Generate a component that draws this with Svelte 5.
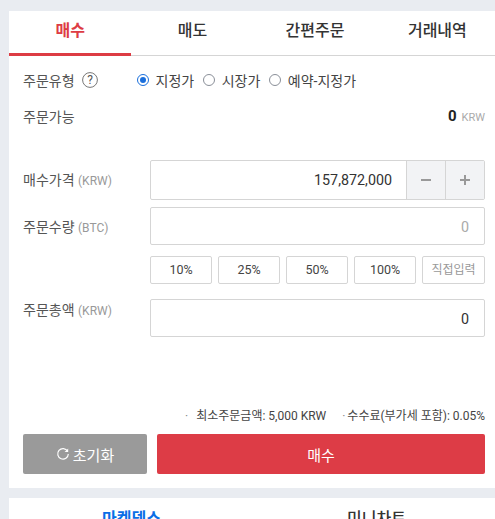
<script>
  const tabs = ['매수', '매도', '간편주문', '거래내역'];
  const pcts = ['10%', '25%', '50%', '100%'];
</script>

<div class="page">
  <section class="panel">
    <nav class="tabs">
      {#each tabs as t, i}
        <div class="tab" class:active={i === 0}>{t}</div>
      {/each}
    </nav>
    <div class="body">
      <div class="row type">
        <div class="label typelabel">주문유형
          <svg class="help" width="16" height="16" viewBox="0 0 16 16"><circle cx="8" cy="8" r="7.4" fill="none" stroke="#777" stroke-width="1"/><text x="8" y="12.2" text-anchor="middle" font-size="12" fill="#555" font-family="Roboto">?</text></svg>
        </div>
        <div class="radios">
          <span class="radio on"></span><span class="rtext">지정가</span>
          <span class="radio"></span><span class="rtext">시장가</span>
          <span class="radio"></span><span class="rtext">예약-지정가</span>
        </div>
      </div>
      <div class="row avail">
        <div class="label">주문가능</div>
        <div class="amount"><b>0</b><span>KRW</span></div>
      </div>
      <div class="row field price">
        <div class="label">매수가격 <small>(KRW)</small></div>
        <div class="box pricebox">
          <div class="val">157,872,000</div>
          <div class="step"><svg width="12" height="12" viewBox="0 0 12 12"><rect x="1" y="5" width="10" height="2" fill="#999"/></svg></div>
          <div class="step"><svg width="12" height="12" viewBox="0 0 12 12"><rect x="1" y="5" width="10" height="2" fill="#999"/><rect x="5" y="1" width="2" height="10" fill="#999"/></svg></div>
        </div>
      </div>
      <div class="row field qty">
        <div class="label">주문수량 <small>(BTC)</small></div>
        <div class="box input muted">0</div>
      </div>
      <div class="pcts">
        {#each pcts as p}<div class="pct">{p}</div>{/each}
        <div class="pct direct">직접입력</div>
      </div>
      <div class="row field total">
        <div class="label">주문총액 <small>(KRW)</small></div>
        <div class="box input">0</div>
      </div>
      <div class="notes">
        <span class="n1">최소주문금액: 5,000 KRW</span>
        <span class="n2">수수료(부가세 포함): 0.05%</span>
      </div>
      <div class="actions">
        <div class="btn reset">
          <svg width="14" height="14" viewBox="0 0 14 14"><path d="M11.6 4.2A5.3 5.3 0 1 0 12.3 7" fill="none" stroke="#fff" stroke-width="1.2"/><path d="M12.2 1.4v3.6H8.6z" fill="#fff"/></svg>
          초기화
        </div>
        <div class="btn buy">매수</div>
      </div>
    </div>
  </section>
  <section class="panel second">
    <div class="t2 blue">마켓뎁스</div>
    <div class="t2">미니차트</div>
  </section>
</div>

<style>
  :global(html), :global(body) { margin: 0; height: 100%; overflow: hidden; background: #e9ecf1; }
  .page {
    width: 495px; height: 519px; overflow: hidden; padding: 11px 0 0 9px; box-sizing: border-box;
    font-family: Roboto, "Noto Sans CJK KR", sans-serif; color: #333; font-size: 14px;
  }
  .panel { width: 490px; background: #fff; }
  .tabs { display: grid; grid-template-columns: repeat(4, 122.4px); height: 45px; border-bottom: 1px solid #d5d5d5; box-sizing: border-box; }
  .tab { text-align: center; font-size: 16px; font-weight: 500; line-height: 40px; height: 45px; box-sizing: border-box; color: #333; }
  .tab.active { color: #dd3c44; font-weight: 700; border-bottom: 3px solid #dd3c44; }
  .body { padding: 11px 14px 0 14px; height: 432px; box-sizing: border-box; position: relative; }
  .row { display: flex; }
  .label { font-size: 14px; color: #555; }
  .label small { font-size: 12px; color: #999; }
  .type { align-items: center; height: 26px; }
  .typelabel { width: 113px; display: flex; align-items: center; gap: 7.5px; flex: none; }
  .radios { display: flex; align-items: center; }
  .radio { width: 10px; height: 10px; border: 1.5px solid #8a8f98; border-radius: 50%; box-sizing: content-box; position: relative; margin-left: 1px; }
  .radio.on { border-color: #1a6fdc; }
  .radio.on::after { content: ''; position: absolute; inset: 2px; border-radius: 50%; background: #1a6fdc; }
  .rtext { margin: 0 8px 0 6.5px; color: #444; }
  .avail { justify-content: space-between; align-items: center; margin-top: 13px; height: 20px; }
  .amount { display: flex; align-items: baseline; gap: 5px; }
  .amount b { font-size: 15px; font-weight: 700; color: #222; }
  .amount span { font-size: 11px; color: #aaa; }
  .field { justify-content: space-between; }
  .box { width: 335px; box-sizing: border-box; border: 1px solid #d5d5d5; border-radius: 2px; background: #fff; }
  .price { margin-top: 34px; align-items: center; height: 40px; }
  .price .label { padding-bottom: 2px; }
  .pricebox { display: flex; height: 40px; }
  .val { flex: 1; text-align: right; padding-right: 14px; line-height: 39px; font-size: 14.3px; color: #333; }
  .step { width: 39px; box-sizing: border-box; background: #f2f3f5; border-left: 1px solid #d5d5d5; display: flex; align-items: center; justify-content: center; }
  .qty { margin-top: 7px; }
  .qty .label { padding-top: 9px; }
  .total .label { padding-top: 0; }
  .input { height: 38px; line-height: 38px; text-align: right; padding-right: 15px; font-size: 14.3px; }
  .muted { color: #aaa; }
  .pcts { display: flex; gap: 6px; margin: 11px 0 0 127px; }
  .pct { width: 62px; height: 28px; line-height: 26px; box-sizing: border-box; border: 1px solid #d5d5d5; border-radius: 2px; text-align: center; font-size: 12.5px; color: #444; }
  .direct { width: 63px; color: #999; font-size: 12px; }
  .total { margin-top: 15px; }
  .notes { position: absolute; right: 14px; top: 350px; font-size: 12px; color: #444; display: flex; gap: 16px; }
  .n1::before, .n2::before { content: '·'; color: #888; margin-right: 8px; }
  .n2::before { margin-right: 2px; }
  .actions { position: absolute; left: 14px; right: 14px; top: 378px; display: flex; gap: 10px; }
  .btn { height: 40px; border-radius: 2px; color: #fff; display: flex; align-items: center; justify-content: center; gap: 3px; font-size: 15px; font-weight: 400; }
  .reset { width: 124px; background: #9a9a9a; }
  .buy { flex: 1; background: #dd3c46; }
  .second { margin-top: 10px; display: grid; grid-template-columns: 245px 245px; height: 41px; }
  .t2 { text-align: center; font-size: 16px; font-weight: 500; line-height: 41px; color: #333; }
  .blue { color: #0a6ee6; font-weight: 700; }
</style>
